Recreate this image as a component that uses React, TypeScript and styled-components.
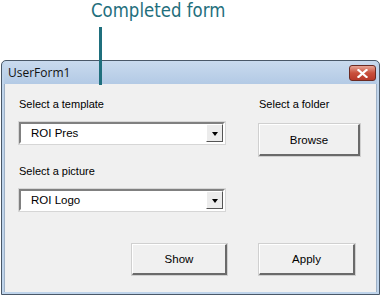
import React from "react";
import styled, { createGlobalStyle } from "styled-components";

const Global = createGlobalStyle`
  html, body { margin: 0; padding: 0; background: #ffffff; }
  body { width: 382px; height: 296px; overflow: hidden; }
`;

const Page = styled.div`
  position: relative;
  width: 382px;
  height: 296px;
  display: flex;
  flex-direction: column;
  background: #ffffff;
`;

const Annotation = styled.div`
  height: 60px;
  display: flex;
  padding-left: 91px;
  box-sizing: border-box;
`;

const Caption = styled.div`
  font-family: "DejaVu Sans", sans-serif;
  font-size: 19.5px;
  line-height: 22px;
  color: #1f6f7d;
  transform: scaleX(0.85);
  transform-origin: left top;
  white-space: nowrap;
`;

const Leader = styled.div`
  position: absolute;
  left: 99px;
  top: 27px;
  width: 3px;
  height: 58px;
  background: #1f6f7d;
  z-index: 2;
`;

const Window = styled.div`
  margin-left: 1px;
  width: 379px;
  height: 235px;
  box-sizing: border-box;
  border: 1px solid #4a5868;
  border-radius: 5px 5px 0 0;
  background: #bfd4eb;
  display: flex;
  flex-direction: column;
  padding: 0 2px 2px 2px;
`;

const TitleBar = styled.div`
  height: 23px;
  display: flex;
  align-items: center;
  justify-content: space-between;
  padding: 0 1px 0 4px;
  background: linear-gradient(#c9daee, #b3cae5);
  border-radius: 4px 4px 0 0;
`;

const Title = styled.span`
  font-family: "Open Sans", "Liberation Sans", sans-serif;
  font-size: 12px;
  color: #111;
`;

const CloseBtn = styled.div`
  width: 25px;
  height: 14px;
  border: 1px solid #6b2a22;
  border-radius: 3px;
  background: linear-gradient(#e8a596, #c9503c 50%, #b8392a);
  display: flex;
  align-items: center;
  justify-content: center;
  margin-top: 1px;
`;

const Body = styled.div`
  flex: 1;
  background: #f0f0f0;
  border-left: 1px solid #9fb1c6;
  border-right: 1px solid #9fb1c6;
  display: flex;
  flex-direction: column;
  padding: 13px 0 0 14px;
  font-family: "Liberation Sans", Arial, sans-serif;
  font-size: 11px;
  color: #000;
`;

const TopRow = styled.div`
  display: flex;
`;

const LeftCol = styled.div`
  width: 206px;
  display: flex;
  flex-direction: column;
`;

const RightCol = styled.div`
  margin-left: 34px;
  display: flex;
  flex-direction: column;
`;

const Label = styled.div<{ $gap: number; $below?: number }>`
  height: 14px;
  line-height: 14px;
  margin-top: ${(p) => p.$gap}px;
  margin-bottom: ${(p) => p.$below ?? 11}px;
  white-space: nowrap;
`;

const Combo = styled.div`
  height: 22px;
  box-sizing: border-box;
  border-style: solid;
  border-width: 2px;
  border-color: #808080 #ffffff #ffffff #808080;
  outline: 1px solid #d6d6d6;
  background: #fff;
  display: flex;
  align-items: stretch;
`;

const ComboText = styled.div`
  flex: 1;
  padding-left: 10px;
  display: flex;
  align-items: center;
  font-size: 11.5px;
`;

const Arrow = styled.div`
  width: 17px;
  box-sizing: border-box;
  border-style: solid;
  border-width: 1px;
  border-color: #ffffff #555 #555 #ffffff;
  background: #ececec;
  display: flex;
  align-items: center;
  justify-content: center;
`;

const Tri = styled.div`
  width: 0;
  height: 0;
  border-left: 3.5px solid transparent;
  border-right: 3.5px solid transparent;
  border-top: 4px solid #000;
  margin-top: 1px;
`;

const Button = styled.div<{ $w: number; $h: number }>`
  width: ${(p) => p.$w}px;
  height: ${(p) => p.$h}px;
  box-sizing: border-box;
  border-style: solid;
  border-width: 1px 2px 2px 1px;
  border-color: #ffffff #6a6a6a #6a6a6a #ffffff;
  outline: 1px solid #d0d0d0;
  background: #f0f0f0;
  display: flex;
  align-items: center;
  justify-content: center;
  font-size: 11.5px;
`;

const BottomRow = styled.div`
  display: flex;
  justify-content: flex-end;
  gap: 32px;
  margin-top: 33px;
  padding-right: 21px;
`;

function DropDown({ value }: { value: string }) {
  return (
    <Combo>
      <ComboText>{value}</ComboText>
      <Arrow>
        <Tri />
      </Arrow>
    </Combo>
  );
}

export default function App() {
  return (
    <Page>
      <Global />
      <Annotation>
        <Caption>Completed form</Caption>
      </Annotation>
      <Leader />
      <Window>
        <TitleBar>
          <Title>UserForm1</Title>
          <CloseBtn>
            <svg width="11" height="9" viewBox="0 0 11 9">
              <path d="M1.5 1 L9.5 8 M9.5 1 L1.5 8" stroke="#fff" strokeWidth="2.2" strokeLinecap="square" />
            </svg>
          </CloseBtn>
        </TitleBar>
        <Body>
          <TopRow>
            <LeftCol>
              <Label $gap={0}>Select a template</Label>
              <DropDown value="ROI Pres" />
              <Label $gap={20}>Select a picture</Label>
              <DropDown value="ROI Logo" />
            </LeftCol>
            <RightCol>
              <Label $gap={0} $below={13}>Select a folder</Label>
              <Button $w={101} $h={32}>Browse</Button>
            </RightCol>
          </TopRow>
          <BottomRow>
            <Button $w={95} $h={31}>Show</Button>
            <Button $w={96} $h={31}>Apply</Button>
          </BottomRow>
        </Body>
      </Window>
    </Page>
  );
}
